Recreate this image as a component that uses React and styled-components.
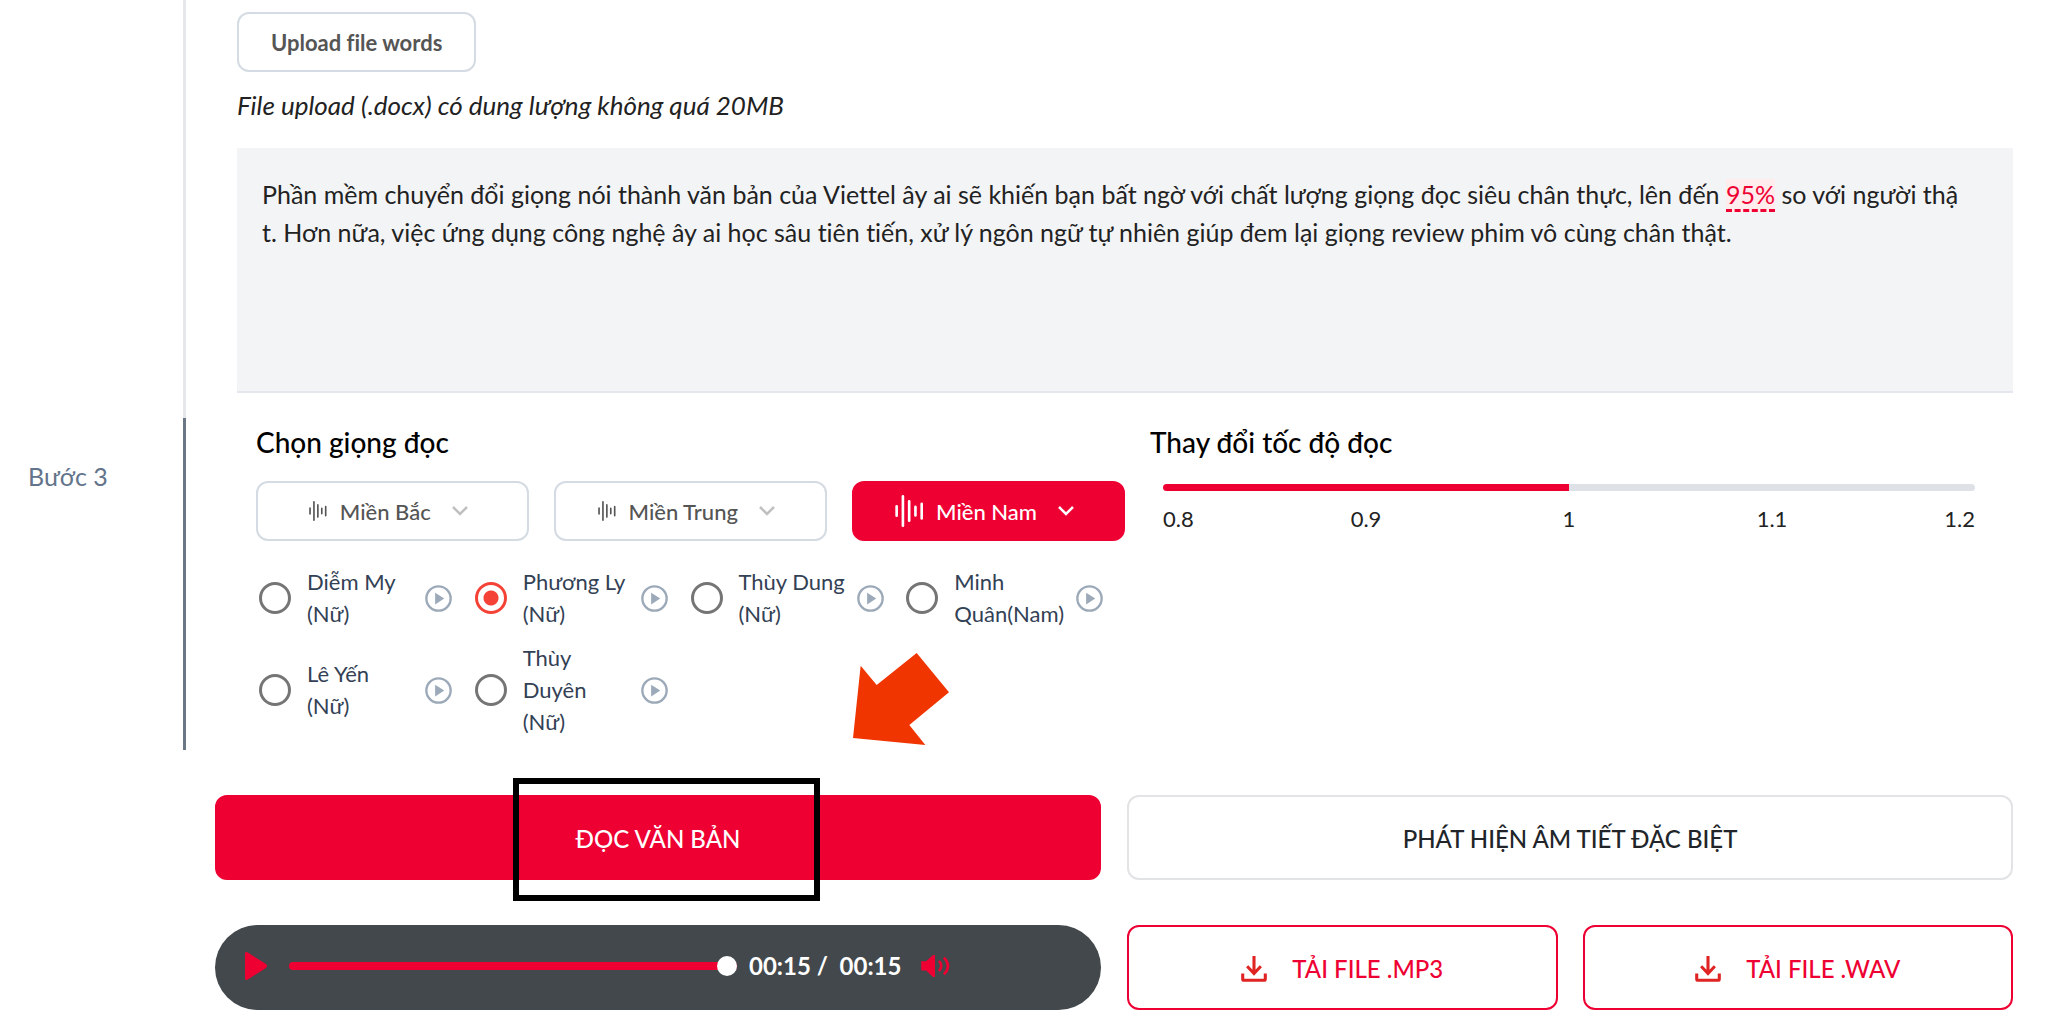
import { useState } from "react";
import styled, { createGlobalStyle } from "styled-components";

const GlobalStyle = createGlobalStyle`
  * {
    box-sizing: border-box;
  }

  body {
    margin: 0;
    background: #ffffff;
    color: #222222;
    font-family: Lato, "Open Sans", sans-serif;
    font-size: 25px;
    font-variant-ligatures: none;
    line-height: 38px;
  }

  button, input {
    font-family: inherit;
    font-variant-ligatures: none;
    margin: 0;
  }

  button {
    cursor: pointer;
  }
`;

const Step = styled.section`
  display: grid;
  grid-template-columns: 186px minmax(0, 1fr);
`;

const StepLabel = styled.div`
  padding: 39px 0 0 28px;
  color: #64748b;
  border-right: 3px solid ${({ $active }) => ($active ? "#6b7785" : "#e5e7eb")};
`;

const UploadContent = styled.div`
  padding: 12px 35px 25px 51px;
`;

const UploadButton = styled.button`
  display: block;
  height: 60px;
  padding: 0 32px;
  border: 2px solid #d5dbe3;
  border-radius: 12px;
  background: #ffffff;
  color: #555555;
  font-size: 22px;
  font-weight: 700;
`;

const Hint = styled.p`
  margin: 14px 0 24px;
  font-size: 26px;
  font-style: italic;
`;

const Editor = styled.div`
  min-height: 245px;
  padding: 27px 48px 27px 25px;
  border-bottom: 2px solid #e5e7f0;
  background: #f3f4f6;
  word-break: break-all;
  outline: none;
`;

const Flagged = styled.span`
  border-bottom: 3px dashed #ee0033;
  background: #ffecec;
  color: #ee0033;
`;

const VoiceContent = styled.div`
  display: grid;
  grid-template-columns: repeat(2, minmax(0, 1fr));
  column-gap: 25px;
  padding: 4px 29px 12px 70px;
`;

const VoiceColumn = styled.div`
  position: relative;
`;

const Title = styled.h2`
  margin: 0;
  color: #000000;
  font-size: 28px;
  font-weight: 500;
  line-height: 40px;
`;

const Regions = styled.div`
  display: grid;
  grid-template-columns: repeat(3, minmax(0, 1fr));
  gap: 25px;
  margin: 19px 0 25px;
`;

const RegionButton = styled.button`
  display: flex;
  align-items: center;
  justify-content: center;
  gap: 13px;
  height: 60px;
  padding: 0 8px 0 0;
  border: 2px solid ${({ $active }) => ($active ? "#ee0033" : "#d5dbe3")};
  border-radius: 12px;
  background: ${({ $active }) => ($active ? "#ee0033" : "#ffffff")};
  color: ${({ $active }) => ($active ? "#ffffff" : "#555555")};
  font-size: 22px;
  font-weight: 500;
`;

const Chevron = styled.svg`
  margin-left: 8px;
  color: ${({ $active }) => ($active ? "#ffffff" : "#c0c0c0")};
`;

const Voices = styled.div`
  display: grid;
  grid-template-columns: repeat(4, minmax(0, 1fr));
  row-gap: 12px;
  margin-right: 6px;
`;

const Voice = styled.div`
  display: flex;
  align-items: center;
  padding-left: 3px;
`;

const VoiceLabel = styled.label`
  display: flex;
  align-items: center;
  gap: 16px;
  color: #334155;
  font-size: 22px;
  line-height: 32px;
`;

const Radio = styled.input`
  appearance: none;
  flex: none;
  width: 32px;
  height: 32px;
  border: 3px solid #757575;
  border-radius: 50%;

  &:checked {
    border-color: #f44336;
    background: radial-gradient(circle, #f44336 7px, transparent 8px);
  }
`;

const VoiceName = styled.span`
  min-width: 106px;
  white-space: pre;
`;

const IconButton = styled.button`
  display: flex;
  flex: none;
  padding: 0;
  border: 0;
  background: none;
  color: ${({ $color }) => $color};
`;

const PreviewButton = styled(IconButton)`
  margin-left: 12px;
`;

const Pointer = styled.svg`
  position: absolute;
  right: 176px;
  bottom: -7px;
`;

const Range = styled.input`
  appearance: none;
  display: block;
  height: ${({ $size }) => $size}px;
  border-radius: 4px;
  outline: none;
`;

const SpeedBox = styled.div`
  margin: 22px 44px 0 13px;
`;

const SpeedRange = styled(Range)`
  width: 100%;

  &::-webkit-slider-thumb {
    appearance: none;
    width: 0;
    height: 0;
  }
`;

const SpeedMarks = styled.div`
  display: flex;
  margin-top: 12px;
  font-size: 22px;
  line-height: 32px;

  span {
    flex: 2;
    text-align: center;
  }

  span:first-child {
    flex: 1;
    text-align: left;
  }

  span:last-child {
    flex: 1;
    text-align: right;
  }
`;

const Actions = styled.div`
  display: grid;
  grid-template-columns: repeat(2, minmax(0, 1fr));
  gap: 45px 26px;
  padding: 45px 35px 14px 215px;
`;

const ButtonHolder = styled.div`
  position: relative;
`;

const Frame = styled.span`
  position: absolute;
  top: -17px;
  left: calc(50% - 145px);
  width: 307px;
  height: 123px;
  border: 6px solid #000000;
  pointer-events: none;
`;

const variants = {
  primary: "background: #ee0033; border-color: #ee0033; color: #ffffff;",
  plain: "background: #ffffff; border-color: #e2e3e5; color: #212529;",
  outline: "background: #ffffff; border-color: #ee0033; color: #ee0033;",
};

const ActionButton = styled.button`
  display: flex;
  align-items: center;
  justify-content: center;
  gap: 25px;
  width: 100%;
  height: 85px;
  padding: 2px 6px 0;
  border: 2px solid;
  border-radius: 12px;
  font-size: 24px;
  font-weight: 500;
  ${({ $variant }) => variants[$variant]}
`;

const Downloads = styled.div`
  display: grid;
  grid-template-columns: repeat(2, minmax(0, 1fr));
  gap: 25px;
`;

const Player = styled.div`
  display: flex;
  align-items: center;
  height: 85px;
  padding: 0 30px 4px;
  border-radius: 43px;
  background: #42484c;
`;

const ProgressRange = styled(Range)`
  flex: 0 1 448px;
  min-width: 0;
  margin: 0 12px 0 22px;

  &::-webkit-slider-thumb {
    appearance: none;
    width: 20px;
    height: 20px;
    border-radius: 50%;
    background: #ffffff;
  }
`;

const Time = styled.span`
  margin-right: 20px;
  color: #ffffff;
  font-size: 24px;
  font-weight: 700;
  white-space: pre;
`;

const regions = ["Miền Bắc", "Miền Trung", "Miền Nam"];

const voices = [
  { id: "diem-my", name: "Diễm My\n(Nữ)" },
  { id: "phuong-ly", name: "Phương Ly\n(Nữ)" },
  { id: "thuy-dung", name: "Thùy Dung\n(Nữ)" },
  { id: "minh-quan", name: "Minh\nQuân(Nam)" },
  { id: "le-yen", name: "Lê Yến\n(Nữ)" },
  { id: "thuy-duyen", name: "Thùy\nDuyên\n(Nữ)" },
];

const speeds = [0.8, 0.9, 1, 1.1, 1.2];

const fill = (percent, rest) => ({
  background: `linear-gradient(to right, #ee0033 ${percent}%, ${rest} ${percent}%)`,
});

const WaveIcon = ({ size }) => (
  <svg height={size} viewBox="0 0 85 97" fill="none" stroke="currentColor" strokeWidth="8" strokeLinecap="round" aria-hidden="true">
    <path d="M5 34v29M24 4v89M43 19v59M62 36v26M81 27v44" />
  </svg>
);

const ChevronIcon = ({ active }) => (
  <Chevron $active={active} width="16" height="10" viewBox="0 0 16 10" fill="none" stroke="currentColor" strokeWidth="2.5" aria-hidden="true">
    <path d="M1 1l7 7 7-7" />
  </Chevron>
);

const PreviewIcon = () => (
  <svg width="27" height="27" viewBox="0 0 80 80" aria-hidden="true">
    <circle cx="40" cy="40" r="36" fill="none" stroke="currentColor" strokeWidth="7" />
    <path d="M30 23l27 17-27 18z" fill="currentColor" />
  </svg>
);

const DownloadIcon = () => (
  <svg width="26" height="26" viewBox="0 0 76 76" fill="none" stroke="#e02424" strokeWidth="9" aria-hidden="true">
    <path d="M38 0v52M18 30l20 21 20-21" />
    <path d="M5 51v16q0 4 4 4h58q4 0 4-4V51" />
  </svg>
);

const App = () => {
  const [region, setRegion] = useState("Miền Nam");
  const [voice, setVoice] = useState("phuong-ly");
  const [speed, setSpeed] = useState(1);
  const [progress, setProgress] = useState(100);

  return (
    <main>
      <GlobalStyle />

      <Step>
        <StepLabel />
        <UploadContent>
          <UploadButton type="button">Upload file words</UploadButton>
          <Hint>File upload (.docx) có dung lượng không quá 20MB</Hint>
          <Editor
            role="textbox"
            aria-multiline="true"
            aria-label="Văn bản"
            contentEditable
            suppressContentEditableWarning
            spellCheck={false}
          >
            Phần mềm chuyển đổi giọng nói thành văn bản của Viettel ây ai sẽ khiến bạn bất ngờ với chất lượng
            giọng đọc siêu chân thực, lên đến <Flagged>95%</Flagged> so với người thật. Hơn nữa, việc ứng dụng
            công nghệ ây ai học sâu tiên tiến, xử lý ngôn ngữ tự nhiên giúp đem lại giọng review phim vô cùng
            chân thật.
          </Editor>
        </UploadContent>
      </Step>

      <Step>
        <StepLabel $active>Bước 3</StepLabel>
        <VoiceContent>
          <VoiceColumn>
            <Title>Chọn giọng đọc</Title>
            <Regions>
              {regions.map((name) => (
                <RegionButton key={name} type="button" $active={name === region} onClick={() => setRegion(name)}>
                  <WaveIcon size={name === region ? 32 : 20} />
                  {name}
                  <ChevronIcon active={name === region} />
                </RegionButton>
              ))}
            </Regions>
            <Voices>
              {voices.map(({ id, name }) => (
                <Voice key={id}>
                  <VoiceLabel htmlFor={id}>
                    <Radio
                      type="radio"
                      id={id}
                      name="voice"
                      checked={voice === id}
                      onChange={() => setVoice(id)}
                    />
                    <VoiceName>{name}</VoiceName>
                  </VoiceLabel>
                  <PreviewButton type="button" $color="#9ca9b9" aria-label="Nghe thử">
                    <PreviewIcon />
                  </PreviewButton>
                </Voice>
              ))}
            </Voices>
            <Pointer width="96" height="92" viewBox="0 0 288 276" fill="#f03500" aria-hidden="true">
              <path d="M191 0l97 118-119 98 48 60L0 255 23 38l48 58z" />
            </Pointer>
          </VoiceColumn>

          <div>
            <Title as="label" htmlFor="speed">Thay đổi tốc độ đọc</Title>
            <SpeedBox>
              <SpeedRange
                type="range"
                id="speed"
                min="0.8"
                max="1.2"
                step="0.1"
                value={speed}
                onChange={(e) => setSpeed(Number(e.target.value))}
                $size={7}
                style={fill((speed - 0.8) * 250, "#dee2e6")}
              />
              <SpeedMarks>
                {speeds.map((mark) => (
                  <span key={mark}>{mark}</span>
                ))}
              </SpeedMarks>
            </SpeedBox>
          </div>
        </VoiceContent>
      </Step>

      <Actions>
        <ButtonHolder>
          <ActionButton type="button" $variant="primary">ĐỌC VĂN BẢN</ActionButton>
          <Frame />
        </ButtonHolder>
        <ActionButton type="button" $variant="plain">PHÁT HIỆN ÂM TIẾT ĐẶC BIỆT</ActionButton>

        <Player>
          <IconButton type="button" $color="#ee0033" aria-label="Phát">
            <svg width="22" height="28" viewBox="0 0 22 28" fill="currentColor" aria-hidden="true">
              <path d="M0 1q0-1 2-1l19 12q2 2 0 4L2 28q-2 0-2-1z" />
            </svg>
          </IconButton>
          <ProgressRange
            type="range"
            aria-label="Tiến độ"
            min="0"
            max="100"
            value={progress}
            onChange={(e) => setProgress(Number(e.target.value))}
            $size={8}
            style={fill(progress, "#ffffff")}
          />
          <Time>00:15 /  00:15</Time>
          <IconButton type="button" $color="#ee0033" aria-label="Âm lượng">
            <svg width="29" height="22" viewBox="0 0 87 67" fill="currentColor" aria-hidden="true">
              <path d="M0 19h15L36 0h6v67h-6L15 47H0z" />
              <path d="M54 18q14 15 0 31M69 8q25 25 0 51" fill="none" stroke="currentColor" strokeWidth="8" />
            </svg>
          </IconButton>
        </Player>
        <Downloads>
          <ActionButton type="button" $variant="outline">
            <DownloadIcon />
            TẢI FILE .MP3
          </ActionButton>
          <ActionButton type="button" $variant="outline">
            <DownloadIcon />
            TẢI FILE .WAV
          </ActionButton>
        </Downloads>
      </Actions>
    </main>
  );
};

export default App;
